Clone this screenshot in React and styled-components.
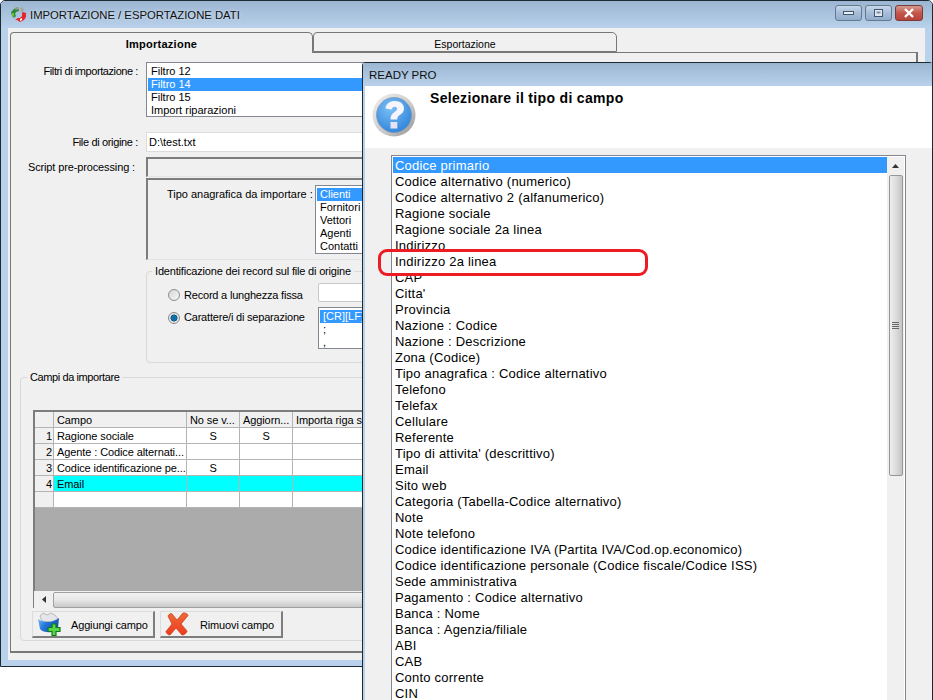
import React from "react";
import styled, { createGlobalStyle } from "styled-components";

const GlobalStyle = createGlobalStyle`
  html, body {
    margin: 0;
    padding: 0;
    background: #ffffff;
    overflow: hidden;
  }
  body {
    font-family: "Liberation Sans", Arial, sans-serif;
    font-size: 11px;
    color: #000000;
  }
`;

const Desktop = styled.div`
  position: relative;
  width: 933px;
  height: 700px;
  overflow: hidden;
  background: #ffffff;
`;

const MainWindow = styled.div`
  position: absolute;
  left: 0;
  top: 0;
  width: 933px;
  height: 667px;
  box-sizing: border-box;
  border: 1px solid #1c2a33;
  border-radius: 5px 5px 0 0;
  background: #b9d1ea;
  display: flex;
  flex-direction: column;
`;

const TitleBar = styled.div`
  height: 27px;
  flex: none;
  display: flex;
  align-items: center;
  padding: 0 9px 0 9px;
  gap: 3px;
  background: linear-gradient(#9cb6d2, #b9d1ea);
  font-size: 11.3px;
  border-radius: 4px 4px 0 0;
`;

const TitleText = styled.span`
  flex: 1;
  color: #101010;
  text-shadow: 0 0 3px rgba(255, 255, 255, 0.6);
`;

const WinButtons = styled.div`
  display: flex;
  gap: 3px;
  margin-top: -3px;
`;

const WinButton = styled.div`
  width: ${(p) => (p.$close ? "28px" : "27px")};
  height: 16px;
  box-sizing: border-box;
  border: 1px solid ${(p) => (p.$close ? "#7c3a36" : "#64788f")};
  border-radius: 3px;
  background: ${(p) =>
    p.$close
      ? "linear-gradient(#d59a90, #c4564a 50%, #b8433b)"
      : "linear-gradient(#c7d8ea, #a5bdd8 50%, #93aecd)"};
  display: flex;
  align-items: center;
  justify-content: center;
`;

const WindowBody = styled.div`
  flex: 1;
  margin: 0 7px 6px 7px;
  padding: 4px 7px 7px 2px;
  background: #f0f0f0;
  display: flex;
  flex-direction: column;
`;

const TabStrip = styled.div`
  display: flex;
  height: 21px;
  flex: none;
  position: relative;
  z-index: 1;
`;

const Tab = styled.div`
  width: ${(p) => p.$w}px;
  height: ${(p) => (p.$active ? "21px" : "20px")};
  box-sizing: border-box;
  border: 1px solid #777777;
  border-bottom: ${(p) => (p.$active ? "none" : "1px solid #777777")};
  border-radius: 4px 5px 0 0;
  background: #f0f0f0;
  text-align: center;
  font-size: ${(p) => (p.$active ? "11px" : "10.500px")};
  font-weight: ${(p) => (p.$active ? "bold" : "normal")};
  letter-spacing: ${(p) => (p.$active ? "0.25px" : "0")};
  line-height: 22px;
`;

const TabPanel = styled.div`
  flex: 1;
  width: 908px;
  box-sizing: border-box;
  margin-top: -1px;
  border: 1px solid #777777;
  border-bottom: 2px solid #777777;
  border-right: 2px solid #777777;
  padding: 9px 0 0 0;
  display: flex;
  flex-direction: column;
`;

const FieldRow = styled.div`
  display: flex;
  align-items: flex-start;
  margin-top: ${(p) => p.$top || 0}px;
`;

const FieldLabel = styled.div`
  width: 127px;
  box-sizing: border-box;
  padding-right: ${(p) => p.$inset || 0}px;
  margin-right: 8px;
  margin-top: ${(p) => p.$top ?? 3}px;
  letter-spacing: ${(p) => p.$track || 0}px;
  text-align: right;
  white-space: nowrap;
`;

const ListBox = styled.div`
  width: ${(p) => p.$w}px;
  height: ${(p) => p.$h}px;
  box-sizing: border-box;
  flex: none;
  border: 1px solid #828790;
  background: #ffffff;
  padding: 2px 1px;
  overflow: hidden;
`;

const ListRow = styled.div`
  height: 13px;
  line-height: 13px;
  padding-left: 3px;
  white-space: nowrap;
  background: ${(p) => (p.$selected ? "#3399ff" : "transparent")};
  color: ${(p) => (p.$selected ? "#ffffff" : "#000000")};
`;

const TextInput = styled.div`
  width: 760px;
  height: 20px;
  box-sizing: border-box;
  flex: none;
  background: #ffffff;
  border: 1px solid #dcdcdc;
  padding: 2px 2px;
  line-height: 14px;
`;

const DisabledInput = styled.div`
  width: 760px;
  height: 20px;
  box-sizing: border-box;
  flex: none;
  background: #f0f0f0;
  border: 1px solid #e4e4e4;
  border-top: 2px solid #7d7d7d;
  border-left: 2px solid #7d7d7d;
`;

const TypePanel = styled.div`
  width: 760px;
  height: 82px;
  margin: 1px 0 0 135px;
  box-sizing: border-box;
  border: 1px solid #e4e4e4;
  border-top: 2px solid #7d7d7d;
  border-left: 2px solid #7d7d7d;
  padding: 5px 0 0 19px;
  display: flex;
  align-items: flex-start;
`;

const TypeLabel = styled.div`
  width: 141px;
  margin: 3px 7px 0 0;
  letter-spacing: -0.02px;
  white-space: nowrap;
`;

const GroupBox = styled.fieldset`
  margin: ${(p) => p.$margin};
  padding: ${(p) => p.$padding};
  width: ${(p) => p.$w}px;
  height: ${(p) => p.$h}px;
  box-sizing: border-box;
  border: 1px solid #d9d9d9;
  border-radius: 4px;
  min-width: 0;
`;

const GroupLegend = styled.legend`
  margin-left: ${(p) => p.$left}px;
  padding: 0 3px;
  line-height: 13px;
  font-size: 11px;
  letter-spacing: ${(p) => p.$track}px;
`;

const RadioRow = styled.div`
  display: flex;
  align-items: flex-start;
  margin-top: ${(p) => p.$top || 0}px;
`;

const Radio = styled.span`
  width: 12px;
  height: 12px;
  flex: none;
  margin: ${(p) => p.$offset}px 4px 0 0;
  box-sizing: border-box;
  border-radius: 50%;
  border: 1px solid #8c8c8c;
  background: ${(p) =>
    p.$checked
      ? "radial-gradient(circle at 50% 50%, #0f6fa8 0 2.5px, #0a3f66 3.2px, #e6e6e6 3.8px)"
      : "linear-gradient(135deg, #d6d6d6, #f7f7f7)"};
`;

const RadioLabel = styled.span`
  width: 134px;
  flex: none;
  margin-top: ${(p) => p.$offset}px;
  letter-spacing: -0.2px;
  white-space: nowrap;
`;

const SmallInput = styled.div`
  width: 100px;
  height: 19px;
  box-sizing: border-box;
  background: #ffffff;
  border: 1px solid #c8c8c8;
  border-radius: 2px;
`;

const Grid = styled.div`
  width: 860px;
  height: 181px;
  box-sizing: border-box;
  background: #ababab;
  border-top: 2px solid #7d7d7d;
  border-left: 2px solid #7d7d7d;
  display: flex;
  flex-direction: column;
`;

const GridRow = styled.div`
  display: grid;
  grid-template-columns: 19px 133px 53px 53px 200px 1fr;
  height: 16px;
  flex: none;
  background: #ffffff;
`;

const GridCell = styled.div`
  box-sizing: border-box;
  border-right: 1px solid #b4b4b4;
  border-bottom: 1px solid #b4b4b4;
  height: 16px;
  line-height: 17px;
  letter-spacing: -0.1px;
  padding: 0 ${(p) => (p.$number ? "1px" : "3px")} 0 ${(p) => (p.$number ? "0" : "3px")};
  white-space: nowrap;
  overflow: hidden;
  text-align: ${(p) => p.$align || "left"};
  background: ${(p) => (p.$head ? "#f0f0f0" : p.$hit ? "#00ffff" : "#ffffff")};
`;

const GridScrollRow = styled.div`
  width: 860px;
  height: 17px;
  display: flex;
  box-sizing: border-box;
  border-left: 1px solid #7d7d7d;
  background: #f0f0f0;
`;

const ArrowBox = styled.div`
  width: ${(p) => p.$w}px;
  height: ${(p) => p.$h}px;
  flex: none;
  display: flex;
  align-items: center;
  justify-content: center;
`;

const HThumb = styled.div`
  flex: 1;
  margin-top: 1px;
  border: 1px solid #a0a0a0;
  border-radius: 2px;
  background: linear-gradient(#f2f2f2, #e6e6e6 50%, #c8c8c8);
`;

const ButtonRow = styled.div`
  display: flex;
  gap: 5px;
  margin: 3px 0 0 -1px;
`;

const ToolButton = styled.div`
  width: 123px;
  height: 27px;
  box-sizing: border-box;
  border: 1px solid;
  border-width: 1px 2px 2px 1px;
  border-color: #dcdcdc #7d7d7d #7d7d7d #dcdcdc;
  background: #f0f0f0;
  display: flex;
  align-items: center;
  padding-left: 2px;
`;

const ToolLabel = styled.span`
  flex: 1;
  padding: 2px 0 0 ${(p) => p.$gap}px;
  letter-spacing: -0.15px;
  white-space: nowrap;
`;

const Dialog = styled.div`
  position: absolute;
  left: 362px;
  top: 62px;
  width: 571px;
  height: 660px;
  box-sizing: border-box;
  border: 1px solid #1c2a33;
  border-bottom: none;
  border-radius: 4px 4px 0 0;
  background: #b9d1ea;
  display: flex;
  flex-direction: column;
`;

const DialogTitle = styled.div`
  height: 23px;
  flex: none;
  display: flex;
  align-items: center;
  padding-left: 6px;
  font-size: 11.5px;
  color: #101010;
  background: linear-gradient(#9cb6d2, #b9d1ea);
`;

const DialogInner = styled.div`
  flex: 1;
  margin: 0 0 0 2px;
  display: flex;
  flex-direction: column;
  background: #f0f0f0;
`;

const MessageArea = styled.div`
  height: 62px;
  flex: none;
  background: #ffffff;
  display: flex;
  padding-left: 7px;
  gap: 14px;
`;

const Prompt = styled.div`
  font-size: 14px;
  font-weight: bold;
  letter-spacing: 0.33px;
  margin-top: 4px;
  line-height: 16px;
`;

const ChoiceBox = styled.div`
  width: 515px;
  height: 600px;
  margin: 7px 0 0 26px;
  box-sizing: border-box;
  border: 1px solid #828790;
  background: #ffffff;
  display: flex;
  padding: 1px;
`;

const ChoiceList = styled.div`
  flex: 1;
`;

const ChoiceRow = styled.div`
  height: 16px;
  line-height: 18px;
  font-size: 13px;
  letter-spacing: 0.22px;
  padding-left: 2px;
  white-space: nowrap;
  background: ${(p) => (p.$selected ? "#3399ff" : "transparent")};
  color: ${(p) => (p.$selected ? "#ffffff" : "#000000")};
`;

const VScroll = styled.div`
  width: 17px;
  flex: none;
  background: #f0f0f0;
  display: flex;
  flex-direction: column;
  align-items: center;
`;

const VThumb = styled.div`
  width: 14px;
  height: 301px;
  flex: none;
  margin-top: 1px;
  box-sizing: border-box;
  border: 1px solid #979797;
  border-radius: 2px;
  background: linear-gradient(90deg, #eeeeee, #dcdcdc 50%, #c4c4c4);
  display: flex;
  align-items: center;
  justify-content: center;
`;

const VTrack = styled.div`
  flex: 1;
`;

const Highlight = styled.div`
  position: absolute;
  left: 378px;
  top: 249px;
  width: 270px;
  height: 27px;
  box-sizing: border-box;
  border: 3px solid #ed1c24;
  border-radius: 9px;
`;

const AppIcon = () => (
  <svg width="17" height="15" viewBox="0 0 17 15" style={{ flex: "none" }}>
    <path d="M8 0 L9 4 L6 5 L5 7 L6 9 L4 11 L2 9 L1 5 L4 2 Z" fill="#2f8a35" />
    <path d="M4 1 L8 0 L9 2 L6 3 Z" fill="#9a9a8c" />
    <path d="M2 6 L4 6 L4 10 L2 9 Z" fill="#6bbf3a" />
    <path d="M10 1 L12 0 L14 2 L13 5 L11 5 Z" fill="#a8a89c" />
    <path d="M13 5 L16 6 L16 10 L14 13 L10 15 L7 13 L5 13 L8 11 L10 11 L12 9 L12 6 Z" fill="#e8262a" />
    <path d="M10 12 L12 11 L12 13 L10 14 Z" fill="#ffffff" />
  </svg>
);

const QuestionIcon = () => (
  <svg width="44" height="44" viewBox="0 0 44 44" style={{ marginTop: 7, flex: "none" }}>
    <defs>
      <linearGradient id="qRing" x1="0" y1="0" x2="1" y2="1">
        <stop offset="0" stopColor="#f2f2f2" />
        <stop offset="0.6" stopColor="#c8c8c8" />
        <stop offset="1" stopColor="#8f8f8f" />
      </linearGradient>
      <radialGradient id="qFill" cx="0.4" cy="0.3" r="0.8">
        <stop offset="0" stopColor="#7cc0f6" />
        <stop offset="1" stopColor="#2a7fd8" />
      </radialGradient>
    </defs>
    <circle cx="22" cy="22" r="21.5" fill="url(#qRing)" />
    <circle cx="22" cy="22" r="17.5" fill="url(#qFill)" stroke="#7e94ad" strokeWidth="0.7" />
    <path
      d="M13.500 15.500 C14 10.500 18 8 23 8 C28.500 8 32 11 32 15.500 C32 19 29.500 20.800 27.500 22.200 C25.800 23.400 25.300 24.300 25.300 26.500 L18.500 26.500 C18.500 23 19.500 21 22.200 19.200 C24 18 25 17.200 25 15.800 C25 14.500 24 13.700 22.600 13.700 C21 13.700 20 14.800 19.800 16.500 Z"
      fill="#f6f4fc"
    />
    <rect x="18.500" y="29" width="6.800" height="6.500" fill="#e6e3f6" />
  </svg>
);

const AddIcon = () => (
  <svg width="24" height="24" viewBox="0 0 24 24" style={{ flex: "none", marginLeft: 2 }}>
    <defs>
      <linearGradient id="bowl" x1="0" y1="0" x2="1" y2="0.4">
        <stop offset="0" stopColor="#7cc0f5" />
        <stop offset="0.45" stopColor="#2474dc" />
        <stop offset="1" stopColor="#1a55b0" />
      </linearGradient>
    </defs>
    <path d="M3 4 L6 1 L10 3 L14 1 L18 3 L21 7 L14 10 L5 9 Z" fill="#e4e6ea" stroke="#a2a4ac" strokeWidth="0.7" />
    <path d="M1 7 C6 11 16 11 22 6 L21 16 C19 21 7 22 3 17 Z" fill="url(#bowl)" />
    <path d="M15 12 H19 V15.500 H23 V19.500 H19 V23.500 H15 V19.500 H11 V15.500 H15 Z" fill="#58d648" stroke="#117a1d" strokeWidth="1.200" />
  </svg>
);

const RemoveIcon = () => (
  <svg width="24" height="24" viewBox="0 0 24 24" style={{ flex: "none", marginLeft: 2 }}>
    <defs>
      <linearGradient id="cross" x1="0" y1="0" x2="0" y2="1">
        <stop offset="0" stopColor="#f06a38" />
        <stop offset="1" stopColor="#ee3a1c" />
      </linearGradient>
    </defs>
    <path
      d="M3 4 C4 2 6 1 7 2 L12 8 L18 1 C20 0.500 23 2 23 3.500 L16 12 L22 19 C22 21 19 23 17 23 L11 16 L5 23 C3 23 1 21 1 19.500 L7 12 Z"
      fill="url(#cross)"
      stroke="#c8401e"
      strokeWidth="0.8"
    />
  </svg>
);

const ArrowUp = () => (
  <svg width="7" height="4" viewBox="0 0 7 4"><path d="M3.500 0 L7 4 H0 Z" fill="#333333" /></svg>
);

const ArrowDown = () => (
  <svg width="7" height="4" viewBox="0 0 7 4"><path d="M0 0 H7 L3.500 4 Z" fill="#333333" /></svg>
);

const ArrowLeft = () => (
  <svg width="4" height="7" viewBox="0 0 4 7"><path d="M4 0 V7 L0 3.500 Z" fill="#333333" /></svg>
);

const Grip = () => (
  <svg width="7" height="8" viewBox="0 0 7 8">
    <path d="M0 .5 H7 M0 2.500 H7 M0 4.500 H7 M0 6.500 H7" stroke="#666666" strokeWidth="1" />
  </svg>
);

const fieldTypes = [
  "Codice primario",
  "Codice alternativo (numerico)",
  "Codice alternativo 2 (alfanumerico)",
  "Ragione sociale",
  "Ragione sociale 2a linea",
  "Indirizzo",
  "Indirizzo 2a linea",
  "CAP",
  "Citta'",
  "Provincia",
  "Nazione : Codice",
  "Nazione : Descrizione",
  "Zona (Codice)",
  "Tipo anagrafica : Codice alternativo",
  "Telefono",
  "Telefax",
  "Cellulare",
  "Referente",
  "Tipo di attivita' (descrittivo)",
  "Email",
  "Sito web",
  "Categoria (Tabella-Codice alternativo)",
  "Note",
  "Note telefono",
  "Codice identificazione IVA (Partita IVA/Cod.op.economico)",
  "Codice identificazione personale (Codice fiscale/Codice ISS)",
  "Sede amministrativa",
  "Pagamento : Codice alternativo",
  "Banca : Nome",
  "Banca : Agenzia/filiale",
  "ABI",
  "CAB",
  "Conto corrente",
  "CIN",
];

const gridRows = [
  { n: "1", campo: "Ragione sociale", no: "S", agg: "S" },
  { n: "2", campo: "Agente : Codice alternati..." },
  { n: "3", campo: "Codice identificazione pe...", no: "S" },
  { n: "4", campo: "Email", hit: true },
  { n: "" },
];

const App = () => {
  return (
    <Desktop>
      <GlobalStyle />
      <MainWindow>
        <TitleBar>
          <AppIcon />
          <TitleText>IMPORTAZIONE / ESPORTAZIONE DATI</TitleText>
          <WinButtons>
            <WinButton>
              <svg width="11" height="5"><rect x="0.5" y="0.5" width="10" height="3" fill="#e8eef5" stroke="#44566b" /></svg>
            </WinButton>
            <WinButton>
              <svg width="11" height="9"><rect x="1.5" y="0.5" width="8" height="7" fill="#dfe8f2" stroke="#44566b" /><rect x="3.5" y="2.5" width="4" height="2" fill="#7d92a8" /></svg>
            </WinButton>
            <WinButton $close>
              <svg width="12" height="10" viewBox="0 0 12 10"><path d="M2 1 L10 9 M10 1 L2 9" stroke="#ffffff" strokeWidth="2.400" /></svg>
            </WinButton>
          </WinButtons>
        </TitleBar>
        <WindowBody>
          <TabStrip>
            <Tab $active $w={303}>Importazione</Tab>
            <Tab $w={304}>Esportazione</Tab>
          </TabStrip>
          <TabPanel>
            <FieldRow>
              <FieldLabel $track={-0.42}>Filtri di importazione :</FieldLabel>
              <ListBox $w={300} $h={55}>
                <ListRow>Filtro 12</ListRow>
                <ListRow $selected>Filtro 14</ListRow>
                <ListRow>Filtro 15</ListRow>
                <ListRow>Import riparazioni</ListRow>
              </ListBox>
            </FieldRow>
            <FieldRow $top={15}>
              <FieldLabel $top={4} $track={-0.35}>File di origine :</FieldLabel>
              <TextInput>D:\test.txt</TextInput>
            </FieldRow>
            <FieldRow $top={5}>
              <FieldLabel $top={4} $inset={3} $track={-0.13}>Script pre-processing :</FieldLabel>
              <DisabledInput />
            </FieldRow>
            <TypePanel>
              <TypeLabel>Tipo anagrafica da importare :</TypeLabel>
              <ListBox $w={120} $h={69}>
                <ListRow $selected>Clienti</ListRow>
                <ListRow>Fornitori</ListRow>
                <ListRow>Vettori</ListRow>
                <ListRow>Agenti</ListRow>
                <ListRow>Contatti</ListRow>
              </ListBox>
            </TypePanel>
            <GroupBox $margin="5px 0 0 135px" $padding="5px 0 0 21px" $w={700} $h={98}>
              <GroupLegend $left={-16} $track={-0.18}>Identificazione dei record sul file di origine</GroupLegend>
              <RadioRow>
                <Radio $offset={6} />
                <RadioLabel $offset={6}>Record a lunghezza fissa</RadioLabel>
                <SmallInput />
              </RadioRow>
              <RadioRow $top={5}>
                <Radio $checked $offset={5} />
                <RadioLabel $offset={4}>Carattere/i di separazione</RadioLabel>
                <ListBox $w={100} $h={42}>
                  <ListRow $selected>[CR][LF]</ListRow>
                  <ListRow>;</ListRow>
                  <ListRow>,</ListRow>
                </ListBox>
              </RadioRow>
            </GroupBox>
            <GroupBox $margin="8px 0 0 9px" $padding="26px 0 0 12px" $w={880} $h={270}>
              <GroupLegend $left={-6} $track={-0.4}>Campi da importare</GroupLegend>
              <Grid>
                <GridRow>
                  <GridCell $head />
                  <GridCell $head>Campo</GridCell>
                  <GridCell $head>No se v...</GridCell>
                  <GridCell $head>Aggiorn...</GridCell>
                  <GridCell $head>Importa riga se</GridCell>
                  <GridCell $head />
                </GridRow>
                {gridRows.map((row, index) => (
                  <GridRow key={index}>
                    <GridCell $head $number $align="right">{row.n}</GridCell>
                    <GridCell $hit={row.hit}>{row.campo}</GridCell>
                    <GridCell $hit={row.hit} $align="center">{row.no}</GridCell>
                    <GridCell $hit={row.hit} $align="center">{row.agg}</GridCell>
                    <GridCell $hit={row.hit} />
                    <GridCell $hit={row.hit} />
                  </GridRow>
                ))}
              </Grid>
              <GridScrollRow>
                <ArrowBox $w={19} $h={16}><ArrowLeft /></ArrowBox>
                <HThumb />
              </GridScrollRow>
              <ButtonRow>
                <ToolButton>
                  <AddIcon />
                  <ToolLabel $gap={10}>Aggiungi campo</ToolLabel>
                </ToolButton>
                <ToolButton>
                  <RemoveIcon />
                  <ToolLabel $gap={11}>Rimuovi campo</ToolLabel>
                </ToolButton>
              </ButtonRow>
            </GroupBox>
          </TabPanel>
        </WindowBody>
      </MainWindow>
      <Dialog>
        <DialogTitle>READY PRO</DialogTitle>
        <DialogInner>
          <MessageArea>
            <QuestionIcon />
            <Prompt>Selezionare il tipo di campo</Prompt>
          </MessageArea>
          <ChoiceBox>
            <ChoiceList>
              {fieldTypes.map((name, index) => (
                <ChoiceRow key={name} $selected={index === 0}>{name}</ChoiceRow>
              ))}
            </ChoiceList>
            <VScroll>
              <ArrowBox $w={17} $h={17}><ArrowUp /></ArrowBox>
              <VThumb><Grip /></VThumb>
              <VTrack />
              <ArrowBox $w={17} $h={17}><ArrowDown /></ArrowBox>
            </VScroll>
          </ChoiceBox>
        </DialogInner>
      </Dialog>
      <Highlight />
    </Desktop>
  );
};

export default App;
